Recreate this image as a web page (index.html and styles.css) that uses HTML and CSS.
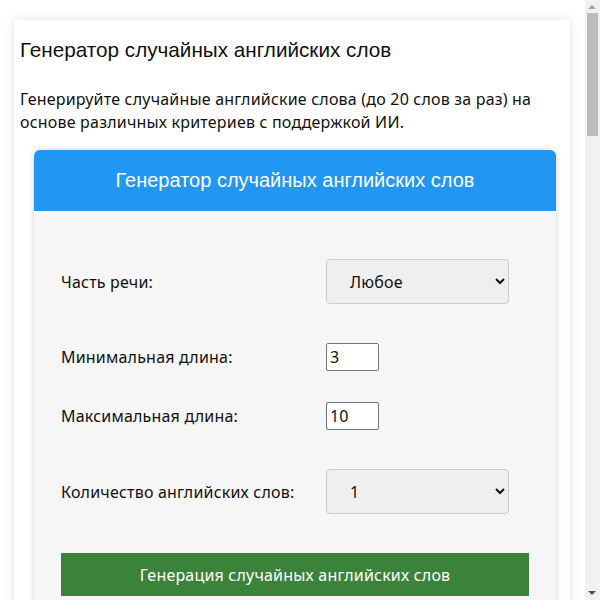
FILE: index.html
```html
<!DOCTYPE html>
<html lang="ru">
<head>
<meta charset="utf-8">
<title>Генератор случайных английских слов</title>
<link rel="stylesheet" href="styles.css">
</head>
<body>
<div class="page">
  <h1 class="title">Генератор случайных английских слов</h1>
  <p class="intro">Генерируйте случайные английские слова (до 20 слов за раз) на основе различных критериев с поддержкой ИИ.</p>
  <div class="tool">
    <div class="tool-head">Генератор случайных английских слов</div>
    <div class="tool-body">
      <div class="row row-select">
        <label class="label">Часть речи:</label>
        <select class="select"><option>Любое</option><option>Существительное</option><option>Глагол</option><option>Прилагательное</option></select>
      </div>
      <div class="row">
        <label class="label">Минимальная длина:</label>
        <input class="num" type="text" value="3">
      </div>
      <div class="row">
        <label class="label">Максимальная длина:</label>
        <input class="num" type="text" value="10">
      </div>
      <div class="row row-select">
        <label class="label">Количество английских слов:</label>
        <select class="select"><option>1</option><option>5</option><option>10</option><option>20</option></select>
      </div>
      <button class="btn" type="button">Генерация случайных английских слов</button>
      <div class="results"></div>
    </div>
  </div>
  <div class="article">
    <h2 class="article-title">Как пользоваться генератором</h2>
    <p class="article-text">Выберите часть речи, минимальную и максимальную длину слова, а также количество слов, после чего нажмите кнопку генерации.</p>
  </div>
</div>
<div class="scrollbar">
  <div class="sb-up"></div>
  <div class="sb-thumb"></div>
  <div class="sb-down"></div>
</div>
</body>
</html>
```
FILE: styles.css
```css
html, body {
  margin: 0;
  padding: 0;
  background: #ffffff;
}
body {
  font-family: "Noto Sans", "Liberation Sans", sans-serif;
  letter-spacing: 0.2px;
  color: #111;
  margin-right: 15px;
}
.page {
  margin: 20px 15px 20px 14px;
  background: #fff;
  box-shadow: 0 0 10px rgba(0,0,0,0.12);
  padding: 1px 6px 20px;
}
.title {
  font-family: "Liberation Sans", Arial, sans-serif;
  letter-spacing: 0;
  font-weight: normal;
  font-size: 20.7px;
  margin: 17px 0 0;
  line-height: 24px;
}
.intro {
  font-size: 16px;
  line-height: 23px;
  margin: 26px 0 16px;
}
.tool {
  margin: 0 8px 0 14px;
  border-radius: 6px;
  overflow: hidden;
  box-shadow: 0 0 6px rgba(0,0,0,0.18);
  background: #f6f6f6;
}
.tool-head {
  background: #2196f3;
  color: #fff;
  font-family: "Liberation Sans", Arial, sans-serif;
  letter-spacing: 0;
  font-size: 20px;
  line-height: 23px;
  padding: 19px 0;
  text-align: center;
}
.tool-body {
  padding: 40px 27px 30px;
}
.row {
  display: flex;
  align-items: center;
  margin-bottom: 31px;
}
.row-select {
  padding: 8px 0;
}
.label {
  width: 265px;
  flex: none;
  font-size: 16px;
}
.select {
  width: 183px;
  height: 45px;
  box-sizing: border-box;
  background: #efefef;
  border: 1px solid #ccc;
  border-radius: 4px;
  font-family: inherit;
  letter-spacing: 0.2px;
  font-size: 16px;
  color: #111;
  padding: 0 6px 0 19px;
}
.num {
  width: 53px;
  height: 28px;
  box-sizing: border-box;
  border: 1px solid #767676;
  border-radius: 2px;
  font-family: inherit;
  font-size: 16px;
  padding: 0 3px;
  background: #fff;
  color: #111;
}
.btn {
  display: block;
  width: 100%;
  height: 43px;
  border: 0;
  background: #3b833a;
  color: #fff;
  font-family: inherit;
  letter-spacing: 0.2px;
  font-size: 16px;
  margin-top: 6px;
}
.results {
  min-height: 200px;
}
.article {
  min-height: 1700px;
  padding: 20px 0;
}
.article-title {
  font-family: "Liberation Sans", Arial, sans-serif;
  font-weight: normal;
  font-size: 20px;
}
.article-text {
  font-size: 16px;
  line-height: 23px;
}
.scrollbar {
  position: fixed;
  top: 0;
  right: 0;
  width: 15px;
  height: 100%;
  background: #f1f1f1;
}
.sb-up {
  position: absolute;
  top: 5px;
  left: 3px;
  width: 0;
  height: 0;
  border-left: 4px solid transparent;
  border-right: 4px solid transparent;
  border-bottom: 4px solid #a3a3a3;
}
.sb-thumb {
  position: absolute;
  top: 13px;
  left: 2px;
  width: 11px;
  height: 123px;
  background: #bcbcbc;
}
.sb-down {
  position: absolute;
  bottom: 5px;
  left: 3px;
  width: 0;
  height: 0;
  border-left: 4px solid transparent;
  border-right: 4px solid transparent;
  border-top: 4px solid #505050;
}
```
